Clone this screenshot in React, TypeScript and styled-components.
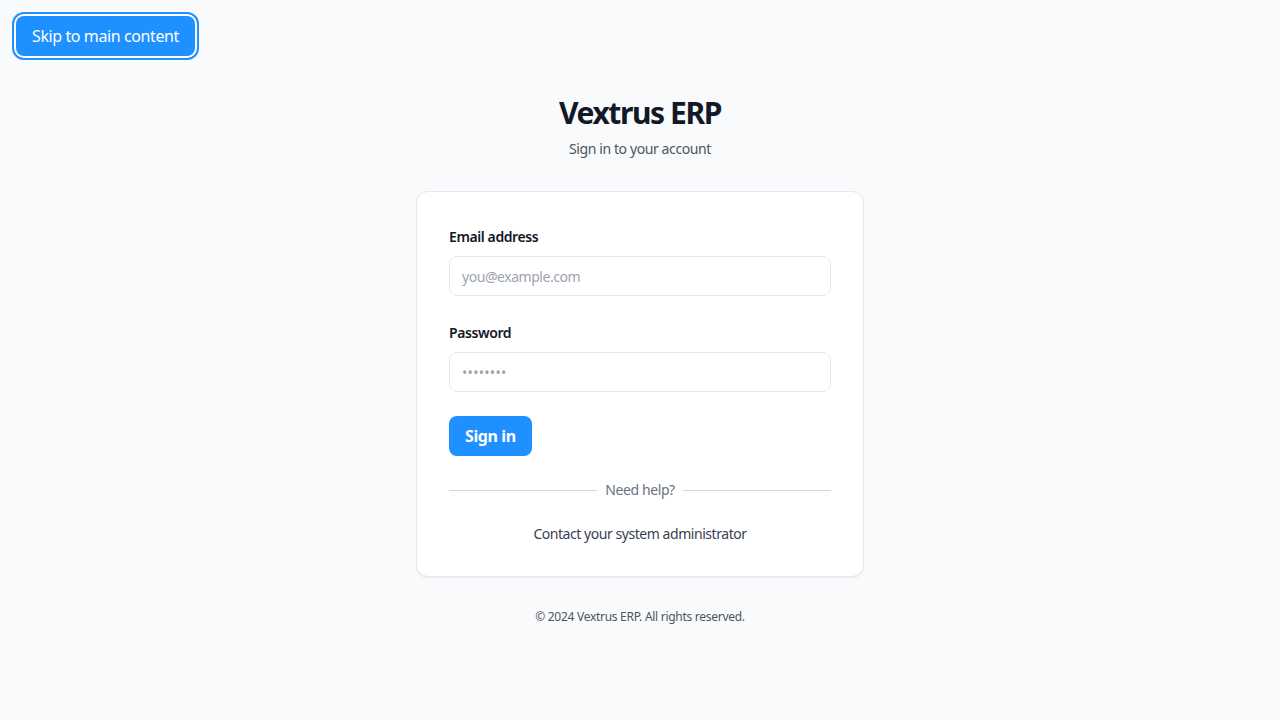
import React from "react";
import styled, { createGlobalStyle } from "styled-components";

const GlobalStyle = createGlobalStyle`
  * { box-sizing: border-box; }
  html, body { margin: 0; padding: 0; }
  body {
    background: #f9fafb;
    font-family: "Noto Sans", "Open Sans", sans-serif;
    letter-spacing: -0.4px;
    color: #111827;
  }
`;

const Page = styled.div`
  min-height: 100vh;
  display: flex;
  flex-direction: column;
  align-items: center;
  justify-content: center;
`;

const SkipLink = styled.a`
  position: absolute;
  top: 16px;
  left: 16px;
  padding: 8px 16px;
  line-height: 24px;
  font-size: 16px;
  color: #ffffff;
  background: #1e90ff;
  border-radius: 8px;
  text-decoration: none;
  box-shadow: 0 0 0 2px #ffffff, 0 0 0 4px #1e90ff;
`;

const Title = styled.h1`
  margin: 0;
  font-size: 30px;
  line-height: 36px;
  font-weight: 700;
  letter-spacing: -1.4px;
  color: #111827;
  text-align: center;
`;

const Subtitle = styled.p`
  margin: 8px 0 0;
  font-size: 14px;
  line-height: 20px;
  color: #4b5563;
  text-align: center;
`;

const Card = styled.main`
  margin-top: 32px;
  width: 448px;
  padding: 32px;
  background: #ffffff;
  border: 1px solid #e5e7eb;
  border-radius: 12px;
  box-shadow: 0 1px 2px rgba(0, 0, 0, 0.06);
  display: flex;
  flex-direction: column;
  gap: 24px;
`;

const Field = styled.div`
  display: flex;
  flex-direction: column;
  gap: 8px;
`;

const Label = styled.label`
  font-size: 14px;
  line-height: 24px;
  padding-top: 1px;
  margin-bottom: -1px;
  font-weight: 600;
  color: #111827;
`;

const Input = styled.input`
  height: 40px;
  width: 100%;
  padding: 0 12px;
  border: 1px solid #e5e7eb;
  border-radius: 8px;
  font-family: inherit;
  letter-spacing: -0.45px;
  font-size: 14px;
  color: #111827;
  background: #ffffff;
  outline: none;
  &::placeholder {
    color: #9ca3af;
  }
  &[type="password"] {
    letter-spacing: 0.3px;
  }
`;

const ButtonRow = styled.div`
  display: flex;
`;

const PrimaryButton = styled.button`
  height: 40px;
  padding: 0 16px;
  border: none;
  border-radius: 8px;
  background: #1e90ff;
  color: #ffffff;
  font-family: inherit;
  letter-spacing: -0.4px;
  font-size: 16px;
  font-weight: 700;
  cursor: pointer;
`;

const Divider = styled.div`
  display: flex;
  align-items: center;
  gap: 8px;
  font-size: 14px;
  line-height: 20px;
  color: #6b7280;
  &::before,
  &::after {
    content: "";
    flex: 1;
    height: 1px;
    background: #d1d5db;
  }
`;

const HelpText = styled.p`
  margin: 0;
  font-size: 14px;
  line-height: 20px;
  letter-spacing: -0.45px;
  color: #374151;
  text-align: center;
`;

const Footer = styled.footer`
  margin-top: 32px;
  font-size: 12px;
  line-height: 16px;
  letter-spacing: -0.28px;
  color: #4b5563;
  text-align: center;
`;

export default function App() {
  return (
    <>
      <GlobalStyle />
      <SkipLink href="#main">Skip to main content</SkipLink>
      <Page>
        <Title>Vextrus ERP</Title>
        <Subtitle>Sign in to your account</Subtitle>
        <Card id="main">
          <Field>
            <Label htmlFor="email">Email address</Label>
            <Input id="email" type="email" placeholder="you@example.com" />
          </Field>
          <Field>
            <Label htmlFor="password">Password</Label>
            <Input id="password" type="password" placeholder="••••••••" />
          </Field>
          <ButtonRow>
            <PrimaryButton type="button">Sign in</PrimaryButton>
          </ButtonRow>
          <Divider>Need help?</Divider>
          <HelpText>Contact your system administrator</HelpText>
        </Card>
        <Footer>© 2024 Vextrus ERP. All rights reserved.</Footer>
      </Page>
    </>
  );
}
